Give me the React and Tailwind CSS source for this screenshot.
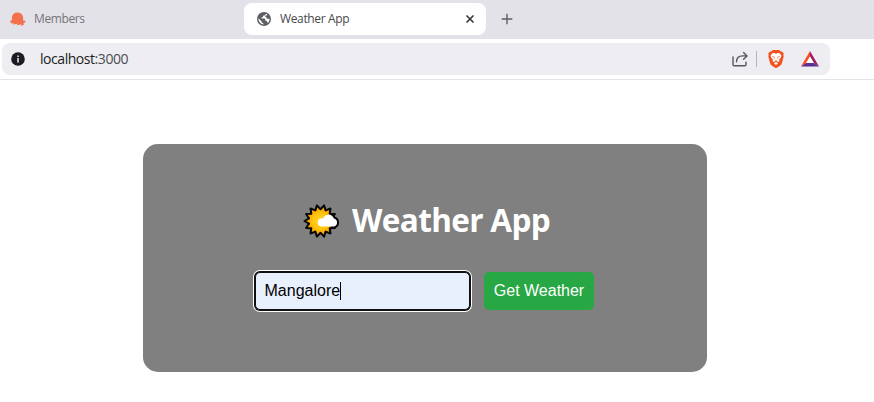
const SUN_POINTS = Array.from({ length: 28 }, (_, i) => {
  const r = i % 2 ? 11.8 : 16;
  const a = (i * Math.PI) / 14 - Math.PI / 2 + Math.PI / 14;
  return `${(17.5 + r * Math.cos(a)).toFixed(2)},${(17 + r * Math.sin(a)).toFixed(2)}`;
}).join(" ");

const CLOUD = "M18.500 22.600a4.200 4.200 0 0 1-.2-8.300 4 4 0 0 1 1.900-.1 5.800 5.800 0 0 1 10.700.3A4.200 4.200 0 0 1 31 22.600z";

function MembersIcon() {
  return (
    <svg className="h-[14px] w-[16px] shrink-0" viewBox="0 0 16 14">
      <path
        fill="#f3714c"
        d="M2 8C1.200 3.600 3.600.6 7.200.6c3.900 0 6.300 2.700 5.900 6.300 0 1.300.4 2 1 2 .5 0 .7-.4.6-.8.900.8.900 2.200-.1 2.700-.5.200-1 .2-1.400 0 .9 1 .8 2-.2 2.700H10.500c.6-.4.700-1 .5-1.700-.6.900-1.300 1.200-2.100 1.200H6.800c.6-.3.8-.8.7-1.400-.8.5-1.500.7-2.300.4-.5.6-1.200.8-2.100.400.5-.2.7-.6.700-1.100-1.300.4-2.600.100-3.300-1.100C.2 9.600.1 8.900.5 8.200c.4.500 1 .500 1.500-.2z"
      />
    </svg>
  );
}

function GlobeIcon() {
  return (
    <svg className="h-[14px] w-[14px] shrink-0" viewBox="0 0 14 14">
      <circle cx="7" cy="7" r="7" fill="#5b5e63" />
      <path
        fill="#fff"
        d="M8.800 1.700c-.1 1.200-.8 1.800-1.900 1.900-.6.100-.9.400-.9 1-.1.700-.5 1-1.200 1-.5 0-.7.200-.6.500.1.400.5.500 1.100.5h1.500c.9 0 1.400.5 1.400 1.300 0 .6.300.9.900.9.700 0 1.100.4 1.200 1.200.1.500.3.900.7 1A5.600 5.600 0 0 0 12.600 6.600c-.5.300-1.100.4-1.700.3-.8-.1-1.200-.5-1.300-1.100-.1-.5-.4-.7-.8-.8-.6-.1-.8-.5-.7-.9.1-.4.5-.6 1-.6.7 0 1.100-.4 1.200-1.100zM1.500 6.300c-.2 3.200 1.800 5.700 4.900 6.200.2-.7 0-1.200-.6-1.400-.9-.3-1.200-.9-1.300-1.800z"
      />
    </svg>
  );
}

function InfoIcon() {
  return (
    <svg className="h-[14px] w-[14px] shrink-0" viewBox="0 0 14 14">
      <circle cx="7" cy="7" r="6.800" fill="#1b1c21" />
      <path fill="#ededf2" d="M6.300 3.500h1.500v1.400H6.300zM6.300 6.100h1.500v4.400H6.300z" />
    </svg>
  );
}

function ShareIcon() {
  return (
    <svg
      className="h-4 w-4 shrink-0"
      viewBox="0 0 16 16"
      fill="none"
      stroke="#56575e"
      strokeWidth="1.400"
      strokeLinecap="round"
      strokeLinejoin="round"
    >
      <path d="M1 6v7.500c0 .8.500 1.200 1.200 1.200h10.600c.7 0 1.200-.5 1.200-1.200v-2.300" />
      <path d="M4.500 10.700c.1-3.700 2.500-5.800 6.300-5.800H15M11.600 1.500L15 4.900l-3.400 3.400" />
    </svg>
  );
}

function BraveIcon() {
  return (
    <svg className="h-[18px] w-4 shrink-0" viewBox="0 0 16 18">
      <path
        fill="#f4511e"
        d="M4.800 0h6.400l1.400 1.500 1.300-.1 1.900 2.200-.5 1.500.4 1.400-1.900 7c-.2.8-.6 1.300-1.200 1.700L8.900 17.800c-.6.3-1.200.3-1.800 0l-3.700-2.600c-.6-.4-1-.9-1.200-1.700l-1.900-7 .4-1.400-.5-1.500 1.900-2.200 1.300.1z"
      />
      <path
        fill="#fff"
        d="M8 3.600l2.300-.6 1.300.2 1.800 2.300-.3 1.800-1.900 2.300.2 1.400-1.100 1.100-1.500-.8L8 11l-.8.3-1.500.8-1.100-1.100.2-1.400-1.900-2.300-.3-1.800 1.800-2.300 1.300-.2zM5.900 13.200L8 12l2.100 1.200L8 15z"
      />
      <path
        fill="none"
        stroke="#f4511e"
        strokeWidth=".55"
        d="M4.200 6.300l2.300.7-.5 1.500.7.9M11.800 6.300l-2.300.7.5 1.500-.7.9M7 10.300l1 .4 1-.4"
      />
    </svg>
  );
}

function BatIcon() {
  return (
    <svg className="h-4 w-[18px] shrink-0" viewBox="0 0 18 16">
      <path fill="#ff4a24" d="M9 0v5.500L5.200 11.900 0 15.600z" />
      <path fill="#9e1f63" d="M9 0l9 15.600-5.200-3.700L9 5.500z" />
      <path fill="#5b2e91" d="M0 15.600l5.200-3.700h7.600l5.200 3.700z" />
      <path fill="#fff" d="M9 5.500l3.800 6.400H5.200z" />
    </svg>
  );
}

function SunCloudIcon() {
  return (
    <svg className="h-[35px] w-[37px] shrink-0" viewBox="0 0 37 35">
      <radialGradient id="sun-fill" cx="17.500" cy="17" r="13" gradientUnits="userSpaceOnUse">
        <stop offset="0" stopColor="#ffd83a" />
        <stop offset=".65" stopColor="#ffc20a" />
        <stop offset="1" stopColor="#f5a000" />
      </radialGradient>
      <clipPath id="cloud-side">
        <rect x="27.500" y="8" width="9.500" height="20" />
      </clipPath>
      <polygon points={SUN_POINTS} fill="url(#sun-fill)" stroke="#080808" strokeWidth="2" strokeLinejoin="round" />
      <path d={CLOUD} fill="none" stroke="#080808" strokeWidth="4" strokeLinejoin="round" clipPath="url(#cloud-side)" />
      <path d={CLOUD} fill="#fff" />
    </svg>
  );
}

function TabStrip() {
  return (
    <div className="flex h-[39px] items-start bg-[#e3e2e8] pt-[3px]">
      <div className="flex h-8 w-[244px] items-center pl-[10px] text-[#74747a]">
        <MembersIcon />
        <span className="ml-2 text-[12px] tracking-[-0.4px]">Members</span>
      </div>
      <div className="flex h-8 w-[242px] items-center rounded-lg bg-white pr-[11px] pl-[13px] text-[#47484d]">
        <GlobeIcon />
        <span className="ml-[9px] text-[12px] tracking-[-0.35px] whitespace-nowrap">Weather App</span>
        <svg className="ml-auto h-[10px] w-[10px]" viewBox="0 0 10 10" stroke="#333438" strokeWidth="1.600">
          <path d="M1.500 1.500l7 7M8.500 1.500l-7 7" />
        </svg>
      </div>
      <div className="flex h-8 items-center pl-[15px]">
        <svg className="h-3 w-3" viewBox="0 0 12 12" stroke="#5d5e64" strokeWidth="1.400">
          <path d="M6 .7v10.600M.7 6h10.600" />
        </svg>
      </div>
    </div>
  );
}

function AddressBar() {
  return (
    <div className="h-[41px] border-b border-[#e4e3e8] bg-white pt-1 pl-[2px]">
      <div className="flex h-8 w-[828px] items-center rounded-lg bg-[#ededf2] pr-[11px] pl-[9px]">
        <InfoIcon />
        <span className="mb-px ml-[15px] text-[14px] tracking-[-0.45px] text-[#4c4d52]">
          <span className="text-[#1b1c21]">localhost</span>:3000
        </span>
        <div className="ml-auto flex items-center">
          <ShareIcon />
          <span className="ml-2 h-4 w-px bg-[#b5b4bb]" />
          <span className="ml-[11px] flex">
            <BraveIcon />
          </span>
          <span className="ml-[17px] flex">
            <BatIcon />
          </span>
        </div>
      </div>
    </div>
  );
}

export default function App() {
  return (
    <div className="h-[402px] w-[874px] overflow-hidden bg-white font-['Open_Sans','Noto_Sans',sans-serif]">
      <TabStrip />
      <AddressBar />
      <main className="mt-16 ml-[143px] h-[228px] w-[564px] rounded-[15px] bg-[#808080] pt-[55px]">
        <h1 className="flex h-11 items-center pl-[160px] font-bold text-white">
          <SunCloudIcon />
          <span className="mb-0.5 ml-3 text-[31.500px] leading-[42px] tracking-[-0.65px] whitespace-nowrap">Weather App</span>
        </h1>
        <div className="mt-[29px] flex items-center pl-[112px] font-['Liberation_Sans',Arial,sans-serif] text-[16px]">
          <div className="flex h-[38px] w-[215px] items-center rounded-[5px] border border-[#101010] bg-[#e8f0fe] pl-[8.500px] text-black shadow-[0_0_0_1px_#101010,0_0_0_2px_#fff]">
            <span>Mangalore</span>
            <span className="h-[18px] w-px bg-black" />
          </div>
          <button className="ml-[14px] h-[38px] w-[110px] rounded-[5px] bg-[#28a745] text-white">Get Weather</button>
        </div>
      </main>
    </div>
  );
}
